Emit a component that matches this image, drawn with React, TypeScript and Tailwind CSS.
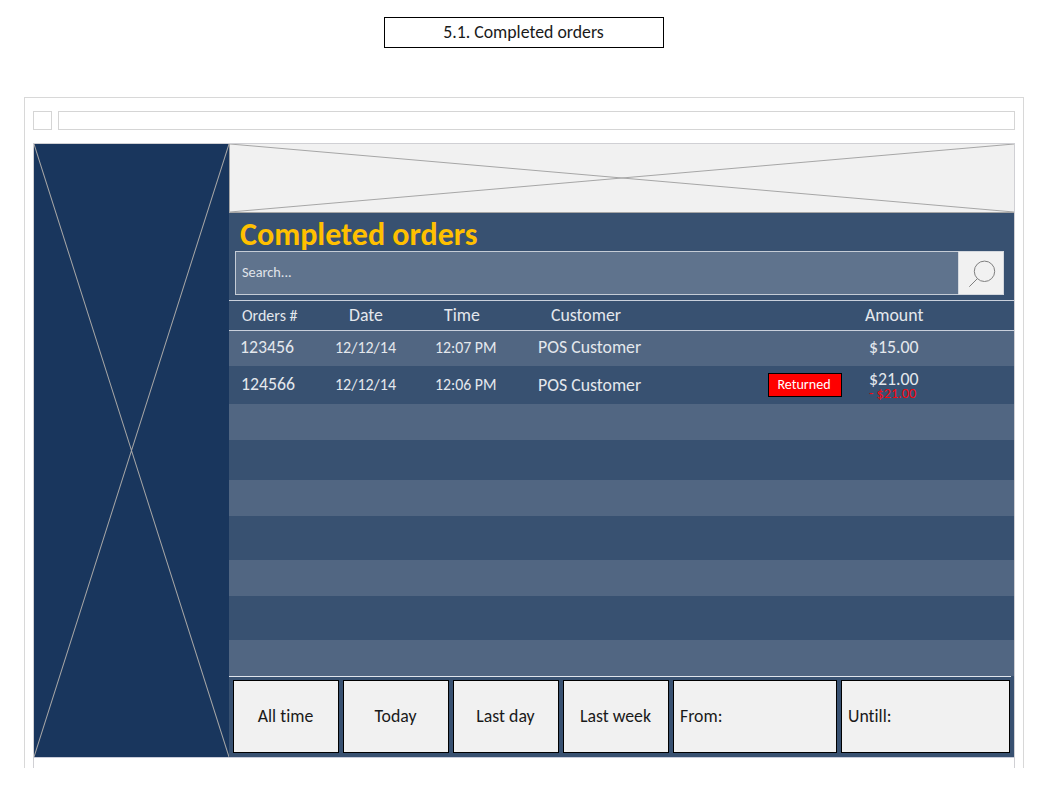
import type { ReactNode } from "react";

type Order = { id: string; date: string; time: string; customer: string; amount: string; refund?: string };

const orders: Order[] = [
  { id: "123456", date: "12/12/14", time: "12:07 PM", customer: "POS Customer", amount: "$15.00" },
  { id: "124566", date: "12/12/14", time: "12:06 PM", customer: "POS Customer", amount: "$21.00", refund: "- $21.00" },
];

const emptyRows = [
  "h-9 bg-[#516682]",
  "h-10 bg-[#385171]",
  "h-9 bg-[#516682]",
  "h-11 bg-[#385171]",
  "h-9 bg-[#516682]",
  "h-11 bg-[#385171]",
  "h-9 bg-[#516682]",
];

const columns = "grid grid-cols-[101px_100px_103px_230px_101px_1fr] items-center whitespace-nowrap pl-[5px]";

function Cross({ stroke }: { stroke: string }) {
  return (
    <svg className="block h-full w-full" viewBox="0 0 100 100" preserveAspectRatio="none" fill="none" stroke={stroke}>
      <path d="M0 0L100 100M100 0L0 100" vectorEffect="non-scaling-stroke" />
    </svg>
  );
}

function OrderRow({ order, className, idClassName }: { order: Order; className: string; idClassName: string }) {
  return (
    <div className={`${columns} shrink-0 text-[#e4e8ed] ${className}`}>
      <span className={`text-[17.8px] ${idClassName}`}>{order.id}</span>
      <span className="text-[16px]">{order.date}</span>
      <span className="text-[15.8px]">{order.time}</span>
      <span className="text-[17.8px]">{order.customer}</span>
      <span>
        {order.refund && (
          <span className="flex h-6 w-[74px] items-center justify-center border border-black bg-[#ff0000] pr-0.5 text-[14.1px] text-white">
            Returned
          </span>
        )}
      </span>
      <span className="flex flex-col">
        <span className="text-[17.8px] leading-[17px]">{order.amount}</span>
        {order.refund && <span className="text-[14.2px] leading-[11px] text-[#f60610]">{order.refund}</span>}
      </span>
    </div>
  );
}

function FilterButton({ children, className }: { children: ReactNode; className: string }) {
  return (
    <button className={`flex h-[73px] items-center border border-black bg-[#f1f1f1] text-[17.8px] text-[#1a1a1a] ${className}`}>
      {children}
    </button>
  );
}

export default function App() {
  return (
    <div className="h-[804px] w-[1059px] overflow-hidden bg-white font-['Carlito','Lato',sans-serif] [font-variant-ligatures:none]">
      <header className="flex h-[97px] pt-[17px] pl-[384px]">
        <h1 className="flex h-[31px] w-[280px] items-center justify-center border border-black pr-px text-[17.8px] text-[#1a1a1a]">
          5.1. Completed orders
        </h1>
      </header>

      <div className="ml-6 h-[671px] w-[1000px] border border-b-0 border-[#d8d8d8] px-2 pt-[13px]">
        <div className="flex h-8 gap-1.5">
          <div className="h-[19px] w-[19px] border border-[#d5d5d5]" />
          <div className="h-[19px] w-[957px] border border-[#d5d5d5]" />
        </div>

        <div className="h-[625px] w-[982px] border-x border-t border-[#d0d0d4]">
          <div className="flex h-[614px] border-b border-[#c9ccda]">
            <aside className="w-[195px] shrink-0 bg-[#19365d]">
              <Cross stroke="#a6a6a6" />
            </aside>

            <main className="flex w-[785px] flex-col bg-[#385171]">
              <div className="h-[69px] shrink-0 border-b border-l border-[#a6a6a6] bg-[#f1f1f1]">
                <Cross stroke="#a6a6a6" />
              </div>

              <div className="flex h-[87px] shrink-0 flex-col pl-1.5">
                <h2 className="h-[38px] pl-[5px] text-[32px] leading-[43px] font-bold text-[#ffc000]">Completed orders</h2>
                <div className="flex h-11">
                  <div className="flex w-[723px] items-center border border-r-0 border-[#c5ccd6] bg-[#5f738d] pl-1.5 text-[14.3px] text-[#e0e4ea]">
                    Search...
                  </div>
                  <button className="w-[46px] border border-[#d4d8de] bg-[#f1f1f1]" aria-label="Search">
                    <svg className="block h-[42px] w-11" viewBox="0 0 44 42" fill="none" stroke="#7f7f7f">
                      <circle cx="25.5" cy="19.3" r="10.2" />
                      <path d="M18.5 26.5L10.3 34.7" />
                    </svg>
                  </button>
                </div>
              </div>

              <div className={`${columns} h-[31px] shrink-0 border-y border-[#c9d0dc] text-[17.8px] text-[#e4e8ed]`}>
                <span className="pl-2 text-[16px]">Orders #</span>
                <span className="pl-3.5">Date</span>
                <span className="pl-[9px]">Time</span>
                <span className="pl-[13px]">Customer</span>
                <span />
                <span className="-ml-1">Amount</span>
              </div>

              <OrderRow order={orders[0]} className="h-[35px] bg-[#516682] pb-0.5" idClassName="pl-1.5" />
              <OrderRow order={orders[1]} className="h-[38px] bg-[#385171]" idClassName="pb-0.5 pl-[7px]" />
              {emptyRows.map((row, i) => (
                <div key={i} className={`shrink-0 ${row}`} />
              ))}

              <div className="mr-[3px] h-px shrink-0 bg-[#e0e5ec]" />
              <div className="flex gap-1 pt-[3px] pl-1">
                <FilterButton className="w-[106px] justify-center pr-px">All time</FilterButton>
                <FilterButton className="w-[106px] justify-center pr-px">Today</FilterButton>
                <FilterButton className="w-[106px] justify-center pr-px">Last day</FilterButton>
                <FilterButton className="w-[106px] justify-center pr-px">Last week</FilterButton>
                <FilterButton className="w-[164px] pl-1.5">From:</FilterButton>
                <FilterButton className="w-[169px] pl-1.5">Untill:</FilterButton>
              </div>
            </main>
          </div>
        </div>
      </div>
    </div>
  );
}
